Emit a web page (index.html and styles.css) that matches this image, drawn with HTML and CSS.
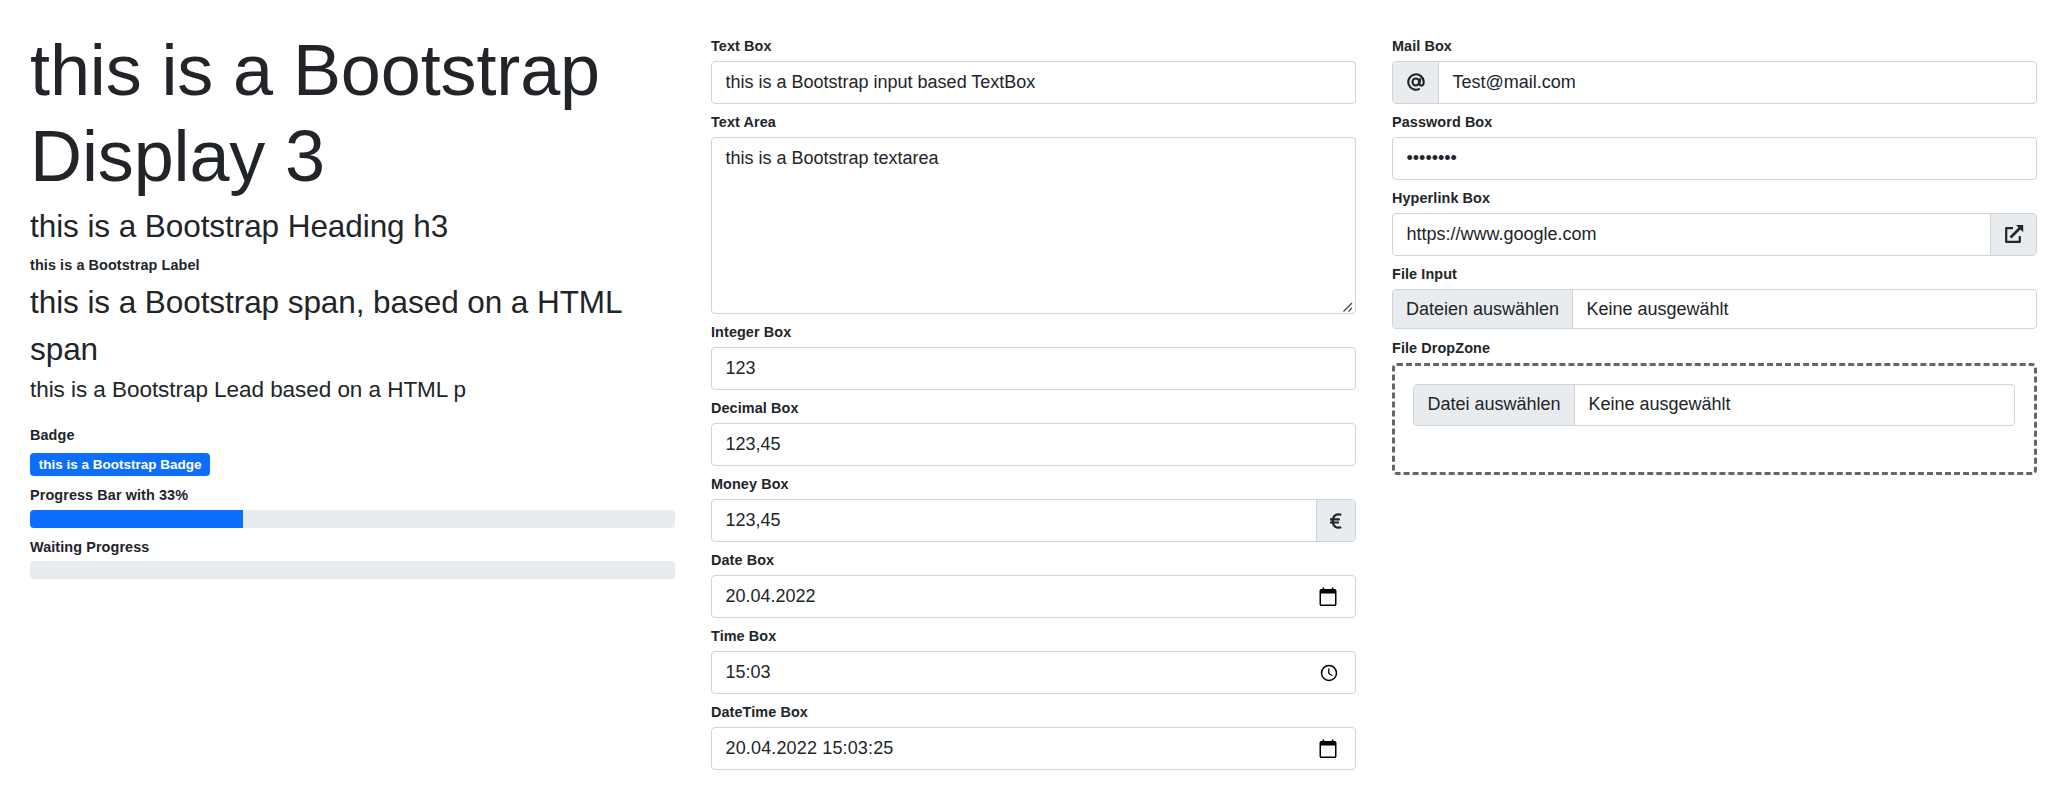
FILE: index.html
```
<!DOCTYPE html>
<html lang="de">
<head>
<meta charset="utf-8">
<title>Bootstrap Controls</title>
<link rel="stylesheet" href="styles.css">
</head>
<body>
<main class="row">
  <section class="col col-text">
    <h1 class="display">this is a Bootstrap Display 3</h1>
    <h3 class="heading">this is a Bootstrap Heading h3</h3>
    <label class="label">this is a Bootstrap Label</label>
    <span class="big-span">this is a Bootstrap span, based on a HTML span</span>
    <p class="lead">this is a Bootstrap Lead based on a HTML p</p>
    <label class="label label-badge">Badge</label>
    <span class="badge">this is a Bootstrap Badge</span>
    <label class="label label-progress">Progress Bar with 33%</label>
    <div class="progress"><div class="progress-bar" style="width:33%"></div></div>
    <label class="label label-waiting">Waiting Progress</label>
    <div class="progress"></div>
  </section>

  <section class="col col-fields">
    <div class="field"><label class="label">Text Box</label><input class="control" type="text" value="this is a Bootstrap input based TextBox"></div>
    <div class="field area-field"><label class="label">Text Area</label><textarea class="control area">this is a Bootstrap textarea</textarea>
      <svg class="grip" width="10" height="10" viewBox="0 0 10 10"><path d="M.5 9.500 9 1M5.500 9.500 9 6" fill="none" stroke="#444" stroke-width="1.300"/></svg></div>
    <div class="field"><label class="label">Integer Box</label><input class="control" type="text" value="123"></div>
    <div class="field"><label class="label">Decimal Box</label><input class="control" type="text" value="123,45"></div>
    <div class="field"><label class="label">Money Box</label>
      <div class="control group"><span class="value">123,45</span><span class="addon addon-euro"><svg width="12" height="16" viewBox="0 0 12 16"><path d="M11.300 1.700C6 .2 2.800 3 2.800 8s3.200 7.800 8.500 6.300M0 6.400h9.800M0 9.500h9" fill="none" stroke="#212529" stroke-width="2.200"/></svg></span></div>
    </div>
    <div class="field"><label class="label">Date Box</label>
      <div class="control group"><span class="value">20.04.2022</span><svg class="picker" width="18" height="20" viewBox="0 0 18 20"><path d="M3.500.5h1.700v1.500h7.600V.5h1.700v1.500h1.300q1.700 0 1.700 1.700v13.600q0 1.700-1.700 1.700H2.200Q.5 19 .5 17.300V3.700Q.5 2 2.200 2h1.300zM2 6.500v11h14V6.500z" fill="#000" fill-rule="evenodd"/></svg></div>
    </div>
    <div class="field"><label class="label">Time Box</label>
      <div class="control group"><span class="value">15:03</span><svg class="picker picker-time" width="18" height="18" viewBox="0 0 18 18"><circle cx="9" cy="9" r="7.500" fill="none" stroke="#000" stroke-width="1.500"/><path d="M8.800 4.500v5l3.600 2.200" fill="none" stroke="#000" stroke-width="1.300"/></svg></div>
    </div>
    <div class="field"><label class="label">DateTime Box</label>
      <div class="control group"><span class="value value-datetime">20.04.2022 15:03:25</span><svg class="picker" width="18" height="20" viewBox="0 0 18 20"><path d="M3.500.5h1.700v1.500h7.600V.5h1.700v1.500h1.300q1.700 0 1.700 1.700v13.600q0 1.700-1.700 1.700H2.200Q.5 19 .5 17.300V3.700Q.5 2 2.200 2h1.300zM2 6.500v11h14V6.500z" fill="#000" fill-rule="evenodd"/></svg></div>
    </div>
  </section>

  <section class="col col-fields">
    <div class="field"><label class="label">Mail Box</label>
      <div class="control group"><span class="addon addon-mail"><svg width="18" height="18" viewBox="0 0 18 18"><g fill="none" stroke="#212529" stroke-width="2.100"><path d="M12.800 15.700A7.700 7.700 0 1 1 16.700 9c0 2.400-1 3.600-2.400 3.600s-2-1-1.800-2.300l.9-5.100"/><ellipse cx="8.800" cy="9" rx="3.300" ry="3.500"/></g></svg></span><span class="value">Test@mail.com</span></div>
    </div>
    <div class="field"><label class="label">Password Box</label><input class="control" type="password" value="password"></div>
    <div class="field"><label class="label">Hyperlink Box</label>
      <div class="control group"><span class="value">https://www.google.com</span><span class="addon addon-link"><svg width="20" height="20" viewBox="0 0 20 20"><path d="M9 4.200H2.200v13.600h13.600V12" fill="none" stroke="#212529" stroke-width="2.200" stroke-linejoin="round"/><path d="M6.500 13.500 16 4" fill="none" stroke="#212529" stroke-width="2.600"/><path d="M12 1h7.200v7.200z" fill="#212529"/></svg></span></div>
    </div>
    <div class="field"><label class="label">File Input</label>
      <div class="control group file"><span class="addon file-button">Dateien auswählen</span><span class="value">Keine ausgewählt</span></div>
    </div>
    <div class="field"><label class="label">File DropZone</label>
      <div class="dropzone">
        <div class="control group"><span class="addon file-button drop-button">Datei auswählen</span><span class="value">Keine ausgewählt</span></div>
      </div>
    </div>
  </section>
</main>
</body>
</html>
```
FILE: styles.css
```
* { box-sizing: border-box; }
body {
  margin: 0;
  background: #fff;
  color: #212529;
  font: 18px/27px "Liberation Sans", Arial, sans-serif;
}
.row {
  display: grid;
  grid-template-columns: repeat(3, 645px);
  column-gap: 36px;
  padding-left: 30px;
  align-items: start;
}
.col { display: flex; flex-direction: column; align-items: stretch; }
.col-text { padding-top: 27px; }
.col-fields { padding-top: 35px; gap: 7.5px; }
.label { display: block; font-size: 14.4px; line-height: 22px; font-weight: 700; letter-spacing: 0.1px; }

.display { margin: 0 0 8px; font-size: 72px; line-height: 86.4px; font-weight: 400; letter-spacing: -0.12px; }
.heading { margin: 0 0 8.500px; font-size: 31.5px; line-height: 37.8px; font-weight: 400; letter-spacing: -0.07px; }
.big-span { margin-top: 3px; font-size: 31.5px; line-height: 47.25px; letter-spacing: -0.07px; }
.lead { margin: -1px 0 18px; font-size: 22.5px; line-height: 33.75px; letter-spacing: -0.05px; }
.badge {
  align-self: flex-start;
  margin: 7px 0 8px;
  padding: 4.7px 8.8px;
  border-radius: 4px;
  background: #0d6efd;
  color: #fff;
  font-size: 13.5px;
  line-height: 13.5px;
  font-weight: 700;
}
.progress {
  display: flex;
  height: 18px;
  margin: 3.500px 0 8px;
  border-radius: 4px;
  overflow: hidden;
  background: #e9ecef;
}
.progress-bar { background: #0d6efd; }

.field { display: flex; flex-direction: column; gap: 4px; }
.control {
  display: block;
  width: 100%;
  height: 42.5px;
  margin: 0;
  padding: 6.75px 13.5px;
  border: 1px solid #ced4da;
  border-radius: 4px;
  outline: 0;
  background: #fff;
  color: #212529;
  font: 18px/27px "Liberation Sans", Arial, sans-serif;
}
.area-field { position: relative; }
.area { height: 176.9px; resize: none; }
.grip { position: absolute; right: 3px; bottom: 2px; }
.group { display: flex; align-items: stretch; padding: 0; overflow: hidden; }
.value { flex: 1; padding: 6.75px 13.5px; white-space: nowrap; }
.value-datetime { letter-spacing: 0.15px; }
.addon {
  display: flex;
  align-items: center;
  justify-content: center;
  background: #e9ecef;
}
.addon-euro { width: 39px; border-left: 1px solid #ced4da; }
.addon-link { width: 46px; border-left: 1px solid #ced4da; }
.addon-mail { width: 46px; padding-bottom: 1px; border-right: 1px solid #ced4da; }
.file { height: 40px; }
.file .value { padding-top: 5.500px; }
.file-button { width: 180px; border-right: 1px solid #ced4da; white-space: nowrap; }
.drop-button { width: 161px; }
.picker { align-self: center; margin-right: 18.500px; }
.picker-time { margin-right: 17.500px; }
.dropzone { height: 112px; padding: 18px 19px 18px 18px; border: 3px dashed #666; border-radius: 5px; }
```
